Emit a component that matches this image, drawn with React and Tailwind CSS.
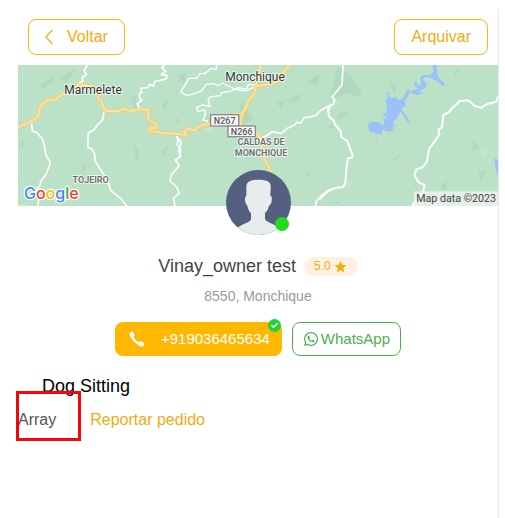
import React from 'react';
import { FaCheck, FaWhatsapp } from 'react-icons/fa';
import { IoIosCall, IoMdStar } from 'react-icons/io';

const GOOGLE_LETTERS = [
    { char: 'G', color: '#4285f4' },
    { char: 'o', color: '#ea4335' },
    { char: 'o', color: '#fbbc05' },
    { char: 'g', color: '#4285f4' },
    { char: 'l', color: '#34a853' },
    { char: 'e', color: '#ea4335' },
];

const LocationMap = () => (
    <svg className="block w-full h-[141px]" viewBox="0 0 1440 423" preserveAspectRatio="xMidYMid slice" role="img" aria-label="Map">
        <rect width="1440" height="423" fill="#bbe2c6" />

        {/* Terrain */}
        <g fill="#b1d9bd">
            <path d="M66 60 L112 32 L108 52 L76 70 Z M125 40 L175 10 L145 55 Z M340 105 L352 85 L356 140 Z M345 235 L365 262 L356 295 Z M190 285 L205 310 L195 320 Z M430 260 L452 240 L440 276 Z M8 235 L16 225 L14 252 Z" />
            <path d="M480 30 L510 20 L496 55 Z M560 150 L590 170 L570 190 Z M670 110 L705 160 L650 200 Z M800 110 L850 85 L842 110 Z M868 50 L905 25 L900 60 Z M775 115 L800 105 L790 130 Z M863 310 L882 342 L866 330 Z M430 120 L450 105 L442 140 Z M475 165 L485 150 L480 180 Z" />
            <path d="M960 5 L990 25 L1008 48 L1030 75 L1026 95 L985 85 L960 98 L935 90 L950 40 Z M960 145 L992 140 L980 158 L955 165 Z M1110 40 L1136 65 L1130 92 Z M1310 15 L1328 10 L1308 38 Z M1365 225 L1385 248 L1362 255 Z M1380 322 L1405 315 L1388 348 Z M1115 290 L1158 260 L1135 285 Z M1270 365 L1288 345 L1284 378 Z M925 185 L950 175 L945 195 Z" />
        </g>
        <g fill="#c8e6c9">
            <path d="M140 55 L160 50 L165 70 Z M555 195 L590 180 L580 205 Z M1388 250 L1418 255 L1395 272 Z M988 345 L1006 352 L985 375 Z M0 420 L30 415 L36 423 L0 423 Z" />
        </g>

        {/* Reservoir */}
        <g fill="#9cc0fa">
            <path d="M1244 0 L1257 0 L1257 28 L1265 42 L1276 50 L1282 66 L1293 53 L1276 66 L1262 52 L1249 44 L1240 38 L1219 37 L1215 45 L1227 58 L1222 70 L1208 76 L1203 82 L1222 84 L1200 90 L1185 86 L1178 80 L1160 108 L1163 122 L1150 132 L1160 145 L1176 172 L1170 173 L1148 140 L1138 158 L1124 172 L1144 193 L1124 178 L1128 197 L1112 200 L1093 194 L1091 209 L1075 204 L1057 202 L1050 188 L1052 174 L1070 170 L1085 172 L1094 184 L1100 172 L1095 162 L1108 157 L1090 145 L1104 144 L1107 130 L1103 105 L1110 96 L1103 88 L1116 78 L1110 92 L1122 99 L1134 95 L1138 104 L1152 103 L1164 84 L1170 70 L1176 80 L1188 76 L1200 72 L1191 61 L1190 46 L1202 62 L1210 60 L1207 38 L1213 30 L1232 31 L1246 22 Z" />
            <path d="M1071 230 L1078 222 L1076 230 Z M1430 280 L1440 284 L1440 330 L1436 325 L1434 308 L1430 302 Z M934 413 L962 411 L960 415 Z" />
        </g>

        {/* Local roads */}
        <g fill="none" stroke="#ffffff" strokeLinejoin="round" strokeLinecap="round">
            <path strokeWidth="5" d="M208 0 L198 18 L206 28 L192 38 L195 48 L185 54" />
            <path strokeWidth="5" d="M440 0 L432 8 L443 18 L430 28 L448 32 L444 42 L410 50 L406 64 L396 58 L388 68 L368 70 L372 82 L364 86 L366 102 L372 106 L358 116 L364 128 L356 132" />
            <path strokeWidth="5" d="M40 170 L43 198 L56 202 L74 224 L80 248 L84 270 L97 293 L86 325 L68 350 L66 362 L55 376 L52 390 L62 402 L60 423" />
            <path strokeWidth="5" d="M258 140 L254 164 L240 178 L228 194 L211 204 L209 248 L222 252 L230 268 L232 290 L248 314 L270 350 L278 376 L308 400 L326 423" />
            <path strokeWidth="5" d="M474 212 L480 222 L478 240 L488 252 L486 275 L472 285 L484 302 L460 330 L456 348 L476 366 L484 385 L466 400 L471 423" />
            <path strokeWidth="5" d="M476 215 L490 232 L482 258 L488 275" />
            <path strokeWidth="4" d="M596 0 L594 14 L580 10 L560 26 L546 26 L536 40 L512 40 L504 56 L488 80 L506 92 L532 85 L552 76 L564 58 L585 56 L600 62 L616 54" />
            <path strokeWidth="4" d="M720 60 L692 58 L684 72 L660 68 L634 80 L612 82 L606 92 L576 96 L570 106 L576 124 L552 120 L536 128 L540 140 L560 134 L562 150 L554 166 L568 166 L564 178" />
            <path strokeWidth="4" d="M620 58 L650 72 L680 78 L706 68 L718 46 L700 42" />
            <path strokeWidth="5" d="M728 220 L750 210 L762 200 L790 205 L808 190 L830 180 L836 172 L848 174 L858 158 L876 156 L895 150 L906 138 L930 124 L946 118 L950 104 L942 96 L952 84 L972 60 L975 0" />
            <path strokeWidth="6" d="M940 120 L930 134 L933 154 L948 168 L950 178 L968 198 L970 216 L988 228 L1004 272 L1002 278 L990 280 L986 302 L984 328 L982 352 L976 366 L956 368 L928 378 L906 402" />
            <path strokeWidth="6" d="M1184 423 L1190 410 L1214 385 L1220 360 L1202 352 L1190 332 L1194 314 L1212 308 L1226 292 L1234 250 L1252 226 L1264 208 L1262 192 L1272 188 L1276 150 L1292 142 L1304 128 L1326 108 L1350 106 L1372 124 L1390 128 L1406 118 L1435 110 L1440 96" />
            <path strokeWidth="5" d="M893 423 L895 408 L912 390 L940 374" />
        </g>

        {/* National roads */}
        <g fill="none" strokeLinejoin="round" strokeLinecap="round">
            <g stroke="#f0cd78" strokeWidth="11">
                <path d="M0 188 L36 170 L54 162 L64 144 L65 128 L86 107 L112 104 L132 88 L160 78 L182 60 L218 62 L232 72 L246 84 L240 100 L252 110 L254 122 L262 138 L306 138 L318 130 L338 139 L366 132 L390 134 L391 162 L418 180 L414 188 L392 190 L396 198 L440 204 L490 208 L506 212 L498 200 L510 190 L528 196 L550 180 L572 178 L606 165" />
                <path d="M814 0 L796 24 L780 46 L764 56 L714 64 L708 88 L690 108 L688 118 L672 148 L666 176 L690 206 L720 206 L730 226 L734 270 L758 318" />
                <path d="M728 0 L722 30 L714 62 M640 149 L670 148" />
            </g>
            <g stroke="#fce29b" strokeWidth="6">
                <path d="M0 188 L36 170 L54 162 L64 144 L65 128 L86 107 L112 104 L132 88 L160 78 L182 60 L218 62 L232 72 L246 84 L240 100 L252 110 L254 122 L262 138 L306 138 L318 130 L338 139 L366 132 L390 134 L391 162 L418 180 L414 188 L392 190 L396 198 L440 204 L490 208 L506 212 L498 200 L510 190 L528 196 L550 180 L572 178 L606 165" />
                <path d="M814 0 L796 24 L780 46 L764 56 L714 64 L708 88 L690 108 L688 118 L672 148 L666 176 L690 206 L720 206 L730 226 L734 270 L758 318" />
                <path d="M728 0 L722 30 L714 62 M640 149 L670 148" />
            </g>
        </g>

        {/* Road shields */}
        <g fill="#f8f8f8" stroke="#8a8a8a" strokeWidth="4">
            <rect x="578" y="149" width="84" height="34" />
            <rect x="630" y="183" width="82" height="32" />
        </g>
        <g className="font-['Roboto']" fill="#5a5a5a" fontSize="27" fontWeight="500" textAnchor="middle">
            <text x="620" y="176">N267</text>
            <text x="671" y="209">N266</text>
        </g>

        {/* Place names */}
        <g className="font-['Roboto']" textAnchor="middle" stroke="#ffffff" strokeLinejoin="round" strokeOpacity="0.7" strokeWidth="6" paintOrder="stroke">
            <g fill="#333333" fontSize="36">
                <text x="225" y="86">Marmelete</text>
                <text x="711" y="47">Monchique</text>
            </g>
            <g fill="#6e6e6e" fontSize="27" fontWeight="600">
                <text x="218" y="353">TOJEIRO</text>
                <text x="729" y="240">CALDAS DE</text>
                <text x="729" y="273">MONCHIQUE</text>
            </g>
        </g>

        <text x="18" y="403" className="font-['Inter']" fontSize="48" fontWeight="500" stroke="#ffffff" strokeWidth="7" strokeLinejoin="round" paintOrder="stroke">
            {GOOGLE_LETTERS.map((l, i) => (
                <tspan key={i} fill={l.color}>{l.char}</tspan>
            ))}
        </text>

        <rect x="1188" y="379" width="252" height="44" fill="#f5f5f5" fillOpacity="0.7" />
        <text x="1434" y="411" className="font-['Roboto']" fontSize="32" fill="#444444" textAnchor="end">Map data ©2023</text>
    </svg>
);

const Avatar = () => (
    <div className="relative -mt-9 size-[65px]">
        <svg className="block size-full" viewBox="0 0 195 195" role="img" aria-label="Vinay_owner test">
            <clipPath id="avatar-circle">
                <circle cx="97.5" cy="97.5" r="97.5" />
            </clipPath>
            <g clipPath="url(#avatar-circle)">
                <rect width="195" height="195" fill="#556080" />
                <path fill="#e7eced" d="M61 54 C60 38 68 29 98 29 C128 29 136 38 134 54 L133 77 C138 79 138 84 137 92 C136 101 133 104 129 107 C127 117 123 123 117 129 L117 146 C121 159 144 159 164 177 L164 195 L30 195 L30 177 C50 159 71 160 75 148 L75 130 C69 123 66 117 64 107 C59 102 58 99 57 90 C57 83 58 79 61 77 Z" />
            </g>
        </svg>
        <span className="absolute right-0.5 bottom-1 size-[14px] rounded-full bg-[#25d91c]" />
    </div>
);

const App = () => {
    return (
        <div className="min-h-screen flex flex-col bg-white pt-[9px] pl-[18px] pr-[6px] font-['Liberation_Sans',sans-serif]">
            <main className="flex-1 border-r border-[#e9e9e9]">
                {/* Header */}
                <div className="flex justify-between items-center p-2.5">
                    <button className="flex items-center h-9 px-4 rounded-lg border border-[#ffb800] text-[#f3ab0e] text-base">
                        <svg className="w-2 h-4 mr-3.5" viewBox="0 0 8 16" fill="none" stroke="currentColor" strokeWidth="1.2" aria-hidden="true">
                            <path d="M7.5 1 L0.8 8 L7.5 15" />
                        </svg>
                        Voltar
                    </button>
                    <button className="h-9 px-4 rounded-lg border border-[#ffb800] text-[#f3ab0e] text-base">Arquivar</button>
                </div>

                <LocationMap />

                {/* Profile */}
                <div className="flex flex-col items-center">
                    <Avatar />
                    <div className="flex items-center gap-2 mt-[19px]">
                        <h1 className="text-lg leading-6 text-[#444444]">Vinay_owner test</h1>
                        <span className="flex items-center gap-0.5 h-[19px] px-2.5 rounded-full bg-[#fff1e0] text-xs text-[#f0ab0d]">
                            5.0 <IoMdStar className="size-[15px]" />
                        </span>
                    </div>
                    <p className="mt-2 text-sm text-[#999999]">8550, Monchique</p>
                    <div className="flex gap-2.5 mt-4">
                        <button className="relative flex items-center gap-3.5 h-[34px] px-3 rounded-lg bg-[#ffb800] text-white text-[15px]">
                            <IoIosCall className="size-5" />
                            +919036465634
                            <span className="absolute -top-[3px] right-px flex items-center justify-center size-[13px] rounded-full bg-[#25d336]">
                                <FaCheck className="size-[7px]" />
                            </span>
                        </button>
                        <button className="flex items-center gap-0.5 h-[34px] px-2.5 rounded-lg border border-[#4caf50] text-[#4caf50] text-[15px]">
                            <FaWhatsapp className="size-4" />
                            WhatsApp
                        </button>
                    </div>
                </div>

                {/* Request */}
                <h2 className="mt-[18px] pl-6 text-lg leading-6 text-black">Dog Sitting</h2>
                <div className="flex gap-[34px] mt-2.5 text-base">
                    <span className="relative text-[#555555]">
                        Array
                        <span className="absolute -top-[17px] -left-0.5 w-[65px] h-[50px] border-3 border-[#fb0207]" />
                    </span>
                    <a href="#report" className="text-[#f3ab0e]">Reportar pedido</a>
                </div>
            </main>
        </div>
    );
};

export default App;
